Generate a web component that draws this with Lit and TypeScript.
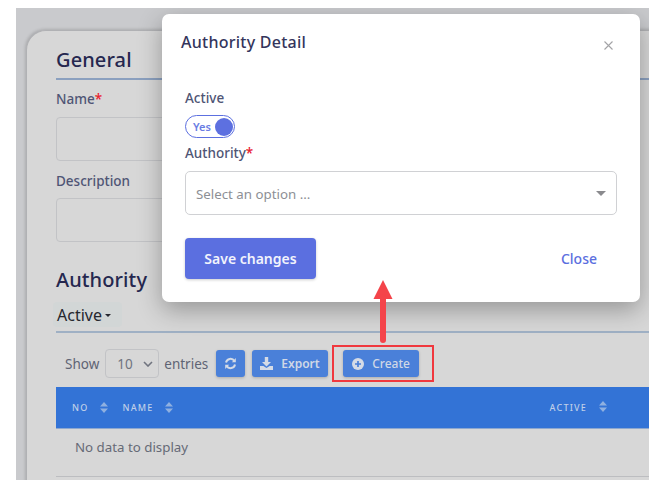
import { LitElement, html, css, svg } from "lit";
import { customElement } from "lit/decorators.js";

const sort = svg`<svg class="sort" width="8" height="11" viewBox="0 0 8 11"><path d="M4 0 8 4.5H0ZM0 6.5H8L4 11Z" fill="currentColor"/></svg>`;

@customElement("app-root")
export class AppRoot extends LitElement {
  static styles = css`
    :host { display: block; width: 655px; height: 485px; background: #fff; overflow: hidden;
      font-family: "Noto Sans", sans-serif; }
    * { box-sizing: border-box; }
    .screen { position: relative; margin: 8px 0 0 16px; width: 633px; height: 472px; background: #c9cacd; overflow: hidden; padding: 22px 0 0 10px; }
    .card { height: 470px; width: 640px; background: #d7d7d7; border-radius: 20px 0 0 0; border-left: 1px solid #b0b1b4; border-top: 1px solid #b0b1b4;
      box-shadow: -1px -1px 3px rgba(0,0,0,.15); padding: 15px 0 0 29px; }
    h2 { margin: 0; font-size: 20px; line-height: 27px; font-weight: 500; color: #25274f; letter-spacing: .1px; }
    .general { border-bottom: 2px solid #8ba0bf; height: 34px; }
    label { display: block; font-size: 13.5px; line-height: 19px; font-weight: 500; color: #4f5575; }
    label b { color: #e8202e; font-weight: 500; }
    .name-l { margin-top: 10px; }
    .input { width: 300px; height: 44px; border: 1px solid #c2c3c6; border-radius: 4px; }
    .name-l + .input { margin-top: 8px; }
    .desc-l { margin-top: 11px; }
    .desc-l + .input { margin-top: 7px; }
    .auth-h { margin-top: 24px; }
    .tab { display: flex; align-items: center; gap: 3px; width: 69px; height: 25px; margin: 9px 0 0 -3px; padding-left: 4px; background: #d2d6d6; border-radius: 4px; font-size: 16px; color: #26272e; }
    .caret { width: 0; height: 0; border: 3.2px solid transparent; border-top-color: #26272e; border-bottom: 0; margin-top: 2px; }
    .rule { width: 593px; height: 2px; background: #9fb0c4; margin-top: 4px; }
    .bar { display: flex; align-items: center; height: 29px; margin-top: 16px; padding-left: 9px; font-size: 13.5px; color: #5f6474; }
    .sel { display: flex; align-items: center; justify-content: space-between; width: 54px; height: 29px; border: 1px solid #c2c3c6; border-radius: 4px; margin: 0 5px 0 6px; padding: 0 5px 0 11px; color: #70747f; font-size: 13.5px; }
    .btn { display: flex; align-items: center; height: 27px; margin-left: 7px; background: #4a80d9; color: #d0d8e6; border-radius: 3px; font-size: 12px; font-weight: 600; box-shadow: 0 1px 3px rgba(0,0,0,.2); }
    .ref { width: 29px; justify-content: center; margin-left: 8px; }
    .exp { width: 76px; padding-left: 8px; gap: 8px; }
    .cre { width: 76px; padding-left: 9px; gap: 8px; margin-left: 15px; font-weight: 500; }
    .thead { display: flex; align-items: center; width: 593px; height: 42px; margin-top: 9px; background: #3373d6; color: #bfcfe8; font-size: 9px; font-weight: 500; letter-spacing: 1.2px; padding-left: 16px; border-bottom: 1px solid #8ea8cf; }
    .sort { color: #8fb0e0; margin-left: 12px; }
    .thead .nm { margin-left: 14px; }
    .thead .ac { margin-left: auto; }
    .thead .last { margin-right: 42px; }
    .empty { width: 593px; height: 48px; border-bottom: 1px solid #bcbdc0; display: flex; align-items: center; padding: 0 0 12px 19px; font-size: 13.3px; color: #666a76; }
    .modal { position: absolute; left: 146px; top: 6px; width: 478px; height: 288px; background: #fff; border-radius: 7px; box-shadow: 0 8px 24px rgba(0,0,0,.3); padding: 17px 23px 0 23px; }
    .mhead { display: flex; justify-content: space-between; margin-left: -4px; }
    .title { font-size: 16px; line-height: 22px; font-weight: 500; color: #34355c; letter-spacing: .25px; }
    .x { margin: 10px 4px 0 0; display: block; }
    .active-l { margin-top: 36px; }
    .toggle { display: flex; align-items: center; justify-content: space-between; width: 50px; height: 23px; margin-top: 7px; border: 1.5px solid #5d70e0; border-radius: 12px; padding: 0 1px 0 7px; font-size: 11px; font-weight: 600; color: #6a7ce4; }
    .knob { width: 18px; height: 18px; border-radius: 50%; background: #5d70e0; }
    .auth-l { margin-top: 6px; }
    .mselect { display: flex; align-items: center; justify-content: space-between; width: 432px; height: 44px; margin-top: 8px; border: 1px solid #d0d1d4; border-radius: 5px; padding: 1px 10px 0; font-size: 13.3px; color: #8d8f95; }
    .tri { width: 0; height: 0; border: 5px solid transparent; border-top-color: #8a8a8e; border-bottom: 0; }
    .actions { display: flex; align-items: center; justify-content: space-between; margin-top: 23px; padding-right: 20px; }
    .save { width: 131px; height: 41px; display: flex; align-items: center; justify-content: center; background: #5b6fe0; color: #f2f3fc; font-size: 14px; font-weight: 600; border-radius: 4px; box-shadow: 0 1px 3px rgba(0,0,0,.2); }
    .close { font-size: 14px; font-weight: 500; color: #5b6fe0; }
    .mark { position: absolute; left: 316px; top: 337px; width: 102px; height: 37px; border: 2.5px solid #f0383e; pointer-events: none; }
    .arrow { position: absolute; left: 356px; top: 271px; }
  `;

  render() {
    return html`<div class="screen">
      <div class="card">
        <h2 class="general">General</h2>
        <label class="name-l">Name<b>*</b></label>
        <div class="input"></div>
        <label class="desc-l">Description</label>
        <div class="input"></div>
        <h2 class="auth-h">Authority</h2>
        <div class="tab">Active<span class="caret"></span></div>
        <div class="rule"></div>
        <div class="bar">
          <span>Show</span>
          <div class="sel"><span>10</span>
            <svg width="10" height="6" viewBox="0 0 10 6"><path d="M1 1l4 4 4-4" fill="none" stroke="#70747f" stroke-width="1.6"/></svg>
          </div>
          <span>entries</span>
          <div class="btn ref">
            <svg width="13" height="13" viewBox="0 0 13 13" fill="none" stroke="#d5dbe6" stroke-width="2"><path d="M2 5.5A4.6 4.6 0 0 1 10.4 4"/><path d="M11 7.5A4.6 4.6 0 0 1 2.6 9"/><path d="M11.8 1v4.2H7.8z" fill="#d5dbe6" stroke="none"/><path d="M1.2 12V7.8h4z" fill="#d5dbe6" stroke="none"/></svg>
          </div>
          <div class="btn exp">
            <svg width="13" height="13" viewBox="0 0 13 13" fill="#d5dbe6"><path d="M4.8 0h3.4v5H11L6.5 9.4 2 5h2.8zM0 9h3.4l3.1 2 3.1-2H13v4H0z"/></svg>
            <span>Export</span>
          </div>
          <div class="btn cre">
            <svg width="12" height="12" viewBox="0 0 12 12"><circle cx="6" cy="6" r="6" fill="#d5dbe6"/><path d="M6 3v6M3 6h6" stroke="#4a80d9" stroke-width="1.7"/></svg>
            <span>Create</span>
          </div>
        </div>
        <div class="thead">
          <span>NO</span>${sort}
          <span class="nm">NAME</span>${sort}
          <span class="ac">ACTIVE</span><span class="last">${sort}</span>
        </div>
        <div class="empty">No data to display</div>
      </div>

      <div class="modal">
        <div class="mhead">
          <span class="title">Authority Detail</span>
          <svg class="x" width="9" height="9" viewBox="0 0 9 9"><path d="M.5.5l8 8M8.5.5l-8 8" stroke="#a3a3a6" stroke-width="1.1"/></svg>
        </div>
        <label class="active-l">Active</label>
        <div class="toggle"><span>Yes</span><span class="knob"></span></div>
        <label class="auth-l">Authority<b>*</b></label>
        <div class="mselect"><span>Select an option ...</span><span class="tri"></span></div>
        <div class="actions">
          <div class="save">Save changes</div>
          <span class="close">Close</span>
        </div>
      </div>

      <svg class="arrow" width="22" height="66" viewBox="0 0 22 66">
        <path d="M11 1 20.5 20H1.5Z" fill="#f4444a"/>
        <path d="M11 18V61" stroke="#f4444a" stroke-width="6" stroke-linecap="round"/>
      </svg>
      <div class="mark"></div>
    </div>`;
  }
}
